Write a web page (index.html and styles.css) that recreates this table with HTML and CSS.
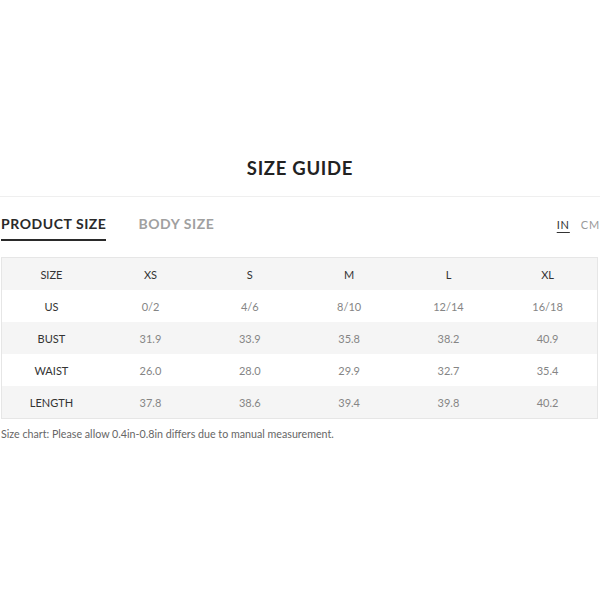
FILE: index.html
```html
<!DOCTYPE html>
<html>
<head>
<meta charset="utf-8">
<link rel="stylesheet" href="styles.css">
</head>
<body>
<div class="page">
  <h1 class="title">SIZE GUIDE</h1>
  <div class="divider"></div>
  <div class="tabs-row">
    <div class="tabs">
      <span class="tab active">PRODUCT SIZE</span>
      <span class="tab">BODY SIZE</span>
    </div>
    <div class="units">
      <span class="unit active">IN</span>
      <span class="unit">CM</span>
    </div>
  </div>
  <table class="chart">
    <tr class="head"><td>SIZE</td><td>XS</td><td>S</td><td>M</td><td>L</td><td>XL</td></tr>
    <tr><td>US</td><td>0/2</td><td>4/6</td><td>8/10</td><td>12/14</td><td>16/18</td></tr>
    <tr><td>BUST</td><td>31.9</td><td>33.9</td><td>35.8</td><td>38.2</td><td>40.9</td></tr>
    <tr><td>WAIST</td><td>26.0</td><td>28.0</td><td>29.9</td><td>32.7</td><td>35.4</td></tr>
    <tr><td>LENGTH</td><td>37.8</td><td>38.6</td><td>39.4</td><td>39.8</td><td>40.2</td></tr>
  </table>
  <p class="note">Size chart: Please allow 0.4in-0.8in differs due to manual measurement.</p>
</div>
</body>
</html>
```
FILE: styles.css
```css
html, body {
  margin: 0;
  padding: 0;
  background: #fff;
}
body {
  font-family: Lato, "Open Sans", sans-serif;
  color: #333;
}
.page {
  width: 600px;
  padding-top: 156px;
}
.title {
  margin: 0;
  text-align: center;
  font-size: 18.5px;
  font-weight: 700;
  letter-spacing: 0.7px;
  color: #222;
  line-height: 24px;
}
.divider {
  height: 1px;
  background: #efefef;
  margin-top: 16px;
}
.tabs-row {
  display: flex;
  justify-content: space-between;
  align-items: flex-start;
  padding: 17px 0 0 1px;
  height: 43px;
}
.tabs {
  display: flex;
  gap: 32px;
}
.tab {
  font-size: 14px;
  font-weight: 700;
  letter-spacing: 0.55px;
  color: #a0a0a0;
  line-height: 20px;
  padding-bottom: 5px;
}
.tab.active {
  color: #2a2a2a;
  border-bottom: 2px solid #2a2a2a;
}
.units {
  display: flex;
  gap: 11px;
  padding-top: 4px;
}
.unit {
  font-size: 11px;
  letter-spacing: 0.8px;
  color: #9a9a9a;
  line-height: 14px;
}
.unit.active {
  color: #333;
  text-decoration: underline;
  text-underline-offset: 3px;
}
.chart {
  margin-left: 1px;
  width: 597px;
  border-collapse: collapse;
  border: 1px solid #e6e6e6;
  table-layout: fixed;
}
.chart td {
  height: 32px;
  padding: 0;
  text-align: center;
  font-size: 11px;
  font-weight: 400;
  color: #858585;
}
.chart td:first-child {
  color: #333;
}
.chart tr:nth-child(odd) {
  background: #f5f5f5;
}
.chart tr.head td {
  color: #333;
}
.note {
  margin: 8px 0 0 1px;
  font-size: 10.7px;
  font-weight: 400;
  color: #666;
}
```
